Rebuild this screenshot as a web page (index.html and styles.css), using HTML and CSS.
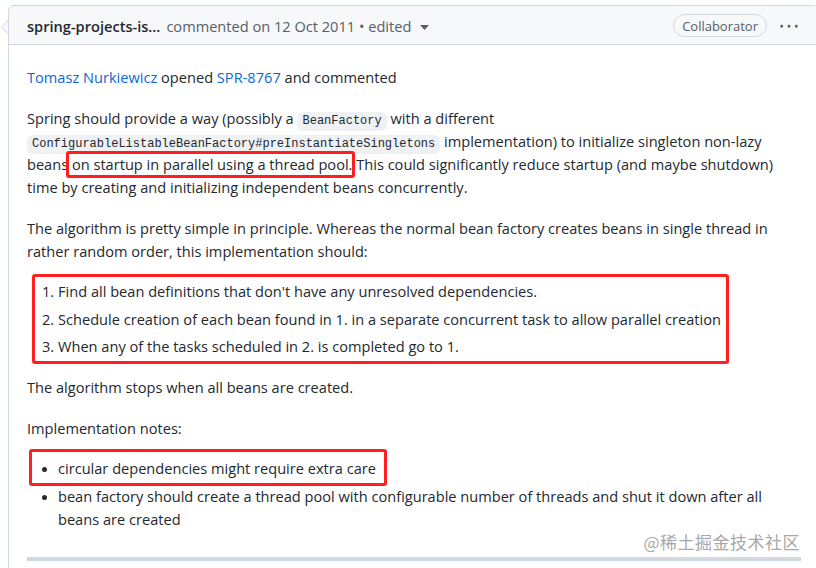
FILE: index.html
```html
<!DOCTYPE html>
<html>
<head>
<meta charset="utf-8">
<link rel="stylesheet" href="styles.css">
</head>
<body>
<div class="page">
  <div class="comment">
    <div class="comment-header">
      <span class="arrow"></span>
      <div class="header-left">
        <span class="author">spring-projects-is...</span>
        <span class="meta">commented on 12 Oct 2011 • edited</span>
        <svg class="caret" width="9" height="5" viewBox="0 0 9 5"><path d="M0 0h9L4.5 5z" fill="#57606a"/></svg>
      </div>
      <div class="header-right">
        <span class="badge">Collaborator</span>
        <svg class="kebab" width="18" height="18" viewBox="0 0 16 16"><path fill="#57606a" d="M8 9.5a1.3 1.3 0 100-2.6 1.3 1.3 0 000 2.6zM1.5 9.5a1.3 1.3 0 100-2.6 1.3 1.3 0 000 2.6zm13 0a1.3 1.3 0 100-2.6 1.3 1.3 0 000 2.6z"/></svg>
      </div>
    </div>
    <div class="comment-body">
      <p><a class="link">Tomasz Nurkiewicz</a> opened <a class="link">SPR-8767</a> and commented</p>
      <p>Spring should provide a way (possibly a <code>BeanFactory</code> with a different <code>ConfigurableListableBeanFactory#preInstantiateSingletons</code> implementation) to initialize singleton non-lazy beans on startup in parallel using a thread pool. This could significantly reduce startup (and maybe shutdown) time by creating and initializing independent beans concurrently.</p>
      <p>The algorithm is pretty simple in principle. Whereas the normal bean factory creates beans in single thread in rather random order, this implementation should:</p>
      <ol>
        <li>Find all bean definitions that don't have any unresolved dependencies.</li>
        <li>Schedule creation of each bean found in 1. in a separate concurrent task to allow parallel creation</li>
        <li>When any of the tasks scheduled in 2. is completed go to 1.</li>
      </ol>
      <p>The algorithm stops when all beans are created.</p>
      <p>Implementation notes:</p>
      <ul>
        <li>circular dependencies might require extra care</li>
        <li>bean factory should create a thread pool with configurable number of threads and shut it down after all beans are created</li>
      </ul>
      <hr>
    </div>
  </div>
  <div class="mark mark1"></div>
  <div class="mark mark2"></div>
  <div class="mark mark3"></div>
  <div class="watermark">@稀土掘金技术社区</div>
</div>
</body>
</html>
```
FILE: styles.css
```css
html, body {
  margin: 0;
  padding: 0;
  background: #ffffff;
  overflow: hidden;
}
.page {
  position: relative;
  width: 816px;
  height: 568px;
  overflow: hidden;
  font-family: "Open Sans", "Noto Sans CJK SC", sans-serif;
  font-size: 14.6px;
  color: #24292f;
}
.comment {
  margin: 5px 0 0 8px;
  width: 811px;
  border: 1px solid #d0d7de;
  border-radius: 6px;
  box-sizing: border-box;
}
.comment-header {
  position: relative;
  display: flex;
  align-items: center;
  justify-content: space-between;
  height: 39px;
  padding: 1px 20px 0 18px;
  box-sizing: border-box;
  background: #f6f8fa;
  border-bottom: 1px solid #d0d7de;
  border-radius: 6px 6px 0 0;
}
.arrow {
  position: absolute;
  left: -8px;
  top: 14px;
  width: 0;
  height: 0;
  border-top: 7px solid transparent;
  border-bottom: 7px solid transparent;
  border-right: 7px solid #d0d7de;
}
.arrow::after {
  content: "";
  position: absolute;
  left: 1px;
  top: -6px;
  border-top: 6px solid transparent;
  border-bottom: 6px solid transparent;
  border-right: 6px solid #f6f8fa;
}
.header-left {
  display: flex;
  align-items: center;
  white-space: nowrap;
}
.author {
  font-weight: 600;
  color: #24292f;
}
.meta {
  margin-left: 6px;
  color: #57606a;
}
.caret {
  margin-left: 9px;
  margin-top: 3px;
}
.header-right {
  display: flex;
  align-items: center;
}
.badge {
  display: inline-flex;
  align-items: center;
  height: 21px;
  padding: 0 8px;
  border: 1px solid #d0d7de;
  border-radius: 12px;
  font-size: 13px;
  font-weight: 500;
  color: #57606a;
}
.kebab {
  margin-left: 13px;
}
.comment-body {
  padding: 21px 17px 0 18px;
  line-height: 23.1px;
}
.comment-body p {
  margin: 0 0 17.6px;
}
.link {
  color: #0969da;
  text-decoration: none;
}
code {
  font-family: "Liberation Mono", monospace;
  font-size: 12px;
  line-height: 1;
  padding: 2px 5px 3px;
  background: rgba(175, 184, 193, 0.2);
  border-radius: 6px;
}
ol, ul {
  margin: 0 0 17.6px;
  padding-left: 31px;
}
li + li {
  margin-top: 4.3px;
}
ul li::marker {
  font-size: 13px;
}
hr {
  height: 4px;
  margin: 26.4px 0;
  border: 0;
  background: #d0d7de;
}
.mark {
  position: absolute;
  border: 3px solid #ff1f1f;
  border-radius: 3px;
  box-sizing: border-box;
}
.mark1 {
  left: 66px;
  top: 151px;
  width: 289px;
  height: 27px;
}
.mark2 {
  left: 32px;
  top: 274px;
  width: 697px;
  height: 90px;
}
.mark3 {
  left: 29px;
  top: 449px;
  width: 358px;
  height: 37px;
}
.watermark {
  position: absolute;
  right: 16px;
  top: 529px;
  font-family: "Noto Sans CJK SC", sans-serif;
  font-size: 17px;
  color: #a8a8a8;
  letter-spacing: 0.5px;
}
```
